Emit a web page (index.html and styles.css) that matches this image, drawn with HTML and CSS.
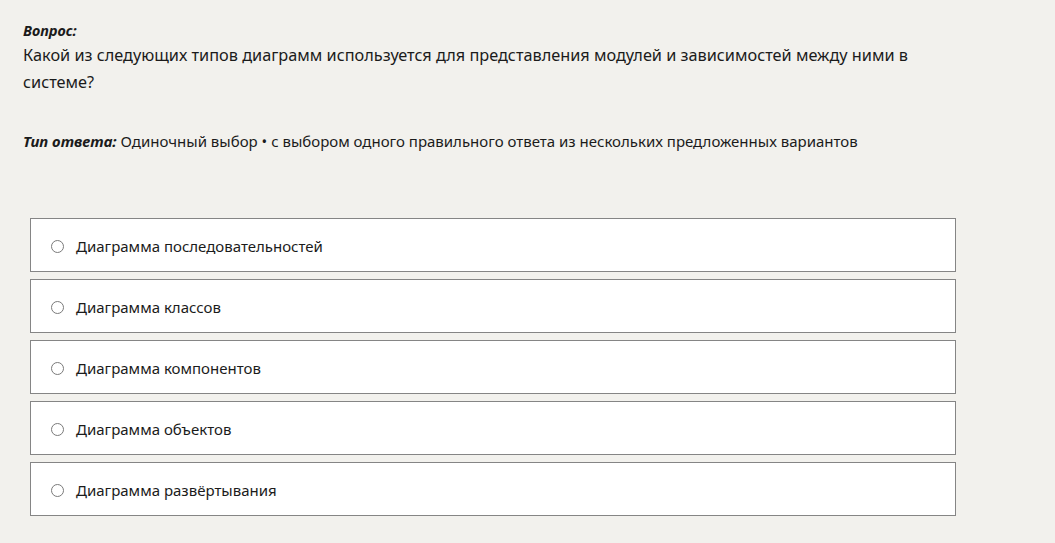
FILE: index.html
```html
<!DOCTYPE html>
<html lang="ru">
<head>
<meta charset="utf-8">
<link rel="stylesheet" href="styles.css">
</head>
<body>
<div class="page">
  <div class="question">
    <div class="label">Вопрос:</div>
    <div class="text">Какой из следующих типов диаграмм используется для представления модулей и зависимостей между ними в системе?</div>
  </div>
  <div class="type"><span class="label">Тип ответа:</span> Одиночный выбор • с выбором одного правильного ответа из нескольких предложенных вариантов</div>
  <div class="options">
    <label class="option"><span class="radio"></span><span>Диаграмма последовательностей</span></label>
    <label class="option"><span class="radio"></span><span>Диаграмма классов</span></label>
    <label class="option"><span class="radio"></span><span>Диаграмма компонентов</span></label>
    <label class="option"><span class="radio"></span><span>Диаграмма объектов</span></label>
    <label class="option"><span class="radio"></span><span>Диаграмма развёртывания</span></label>
  </div>
</div>
</body>
</html>
```
FILE: styles.css
```css
html, body {
  margin: 0;
  padding: 0;
  background: #f2f1ed;
}
body {
  font-family: "Noto Sans", "Open Sans", sans-serif;
  color: #1b1b1b;
}
.page {
  padding: 18px 0 0 23px;
}
.question .label {
  font-size: 14.5px;
  font-weight: 700;
  font-style: italic;
  line-height: 24px;
}
.question .text {
  font-size: 16.3px;
  line-height: 27px;
  width: 900px;
}
.type {
  margin-top: 33px;
  font-size: 15px;
  line-height: 24px;
}
.type .label {
  font-weight: 700;
  font-style: italic;
}
.options {
  margin: 65px 0 0 7px;
  width: 926px;
  display: flex;
  flex-direction: column;
  gap: 7px;
}
.option {
  display: flex;
  align-items: center;
  height: 50px;
  padding-top: 2px;
  background: #fff;
  border: 1px solid #858585;
  padding-left: 20px;
  font-size: 15px;
}
.radio {
  width: 11px;
  height: 11px;
  border: 1px solid #7a7a7a;
  border-radius: 50%;
  margin-right: 12px;
  flex: none;
}
```
